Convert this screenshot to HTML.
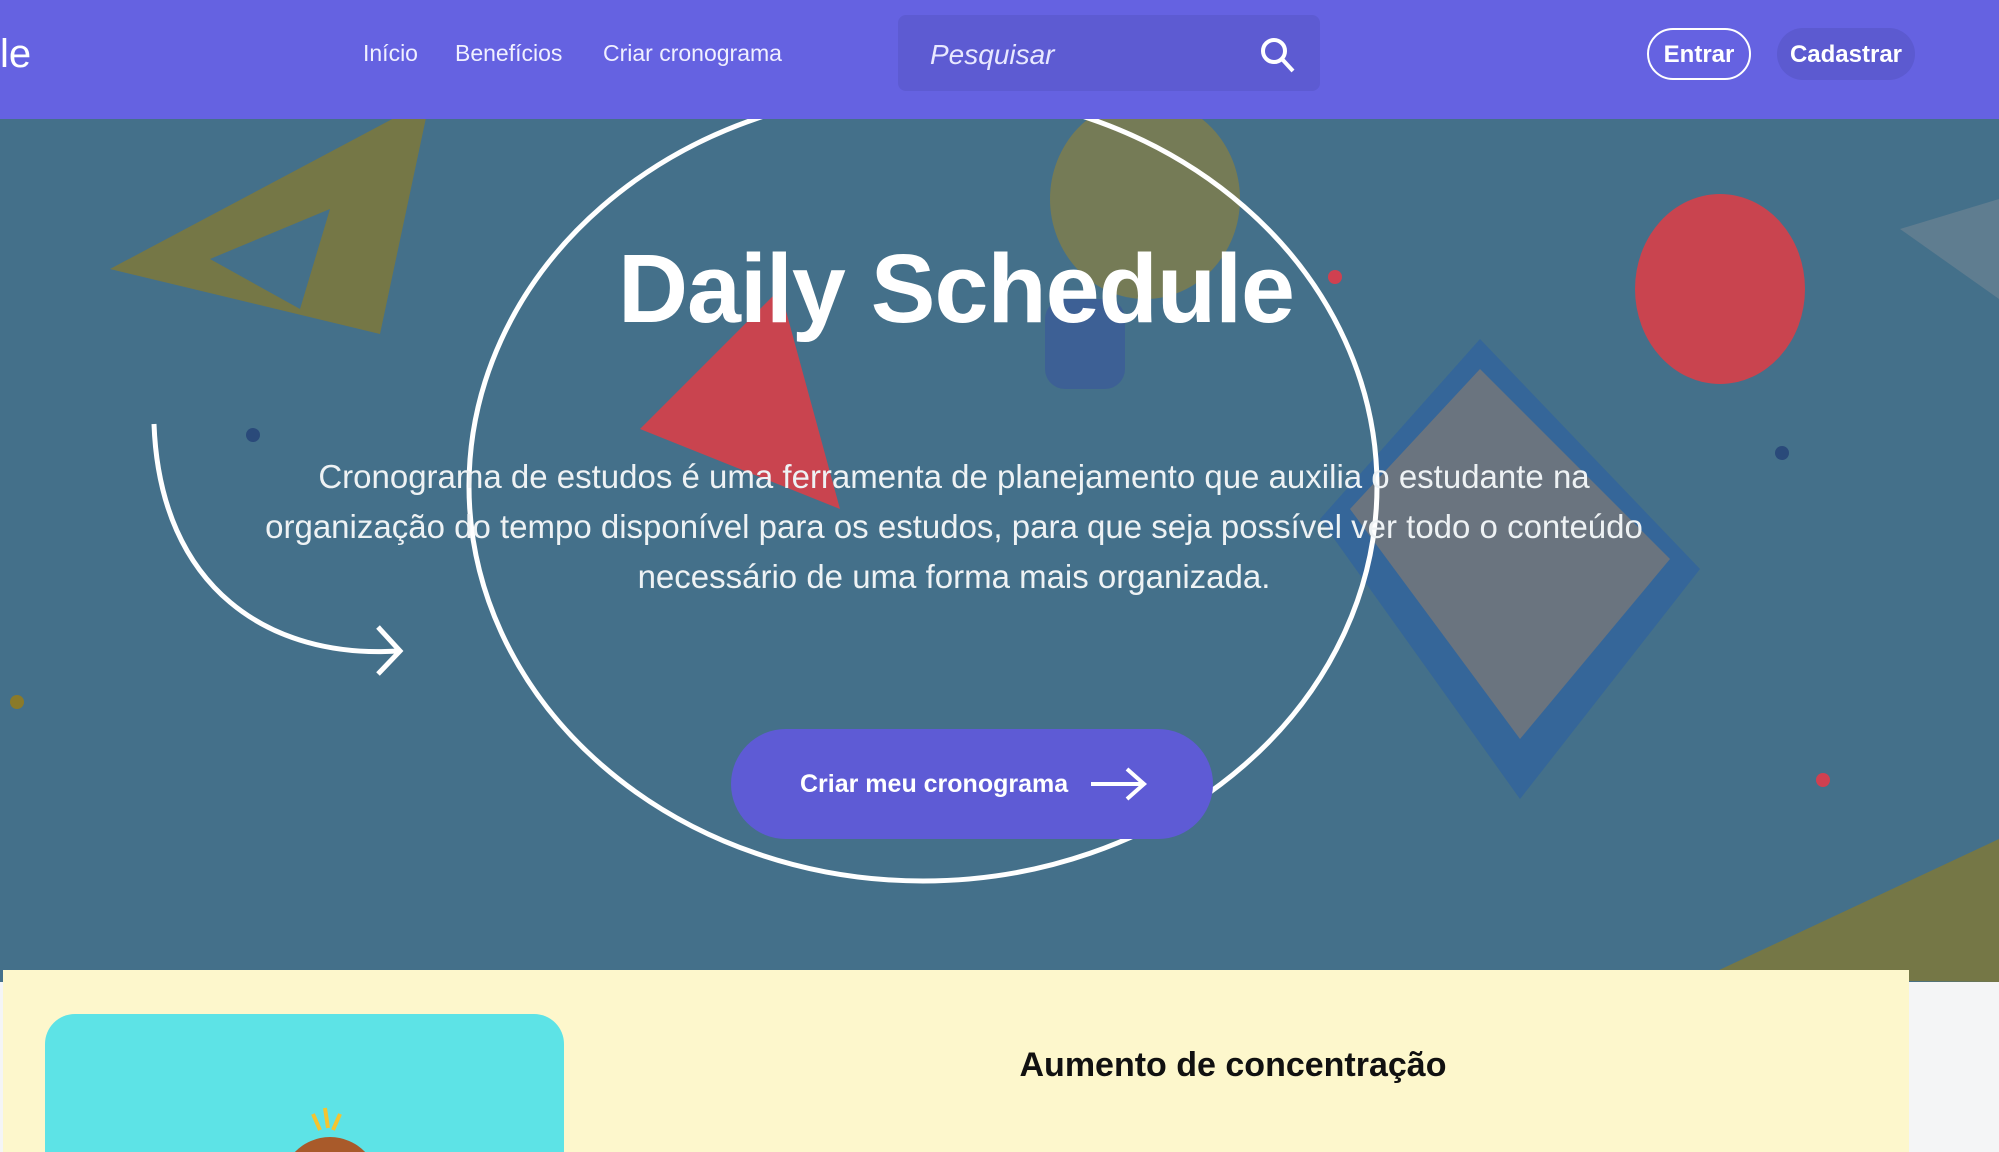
<!DOCTYPE html>
<html style="overflow:hidden"><head><meta charset="utf-8"><style>
*{margin:0;padding:0;box-sizing:border-box}
html,body{width:1999px;height:1152px;overflow:hidden}
body{background:#f4f5f6;font-family:"Liberation Sans",sans-serif;position:relative}
.nav{position:absolute;left:0;top:0;width:1999px;height:119px;background:#6562e1;color:#fff}
.nav a{position:absolute;top:40px;font-size:23px;color:#f0f0ff}
.search{position:absolute;left:898px;top:15px;width:422px;height:76px;background:#5d5bd2;border-radius:8px}
.search span{position:absolute;left:32px;top:24px;font-size:28px;font-style:italic;color:#e8e8ff}
.btn{position:absolute;top:28px;height:52px;border-radius:26px;font-weight:bold;font-size:24px;line-height:50px;text-align:center;color:#fff}
.hero{position:absolute;left:0;top:119px;width:1999px;height:863px;background:#44708a;overflow:hidden}
h1{position:absolute;left:0;width:1912px;text-align:center;font-size:97px;font-weight:bold;color:#fff;letter-spacing:-1px}
p.d{position:absolute;left:54px;width:1800px;text-align:center;font-size:33px;line-height:50px;color:#eef2f4}
.cta{position:absolute;left:731px;width:482px;height:110px;border-radius:55px;background:#5e5bd5;color:#fff;font-weight:bold;font-size:25px;line-height:110px;padding-left:69px}
.yel{position:absolute;left:3px;top:970px;width:1906px;height:182px;background:#fdf7cc}
.card{position:absolute;left:45px;top:1014px;width:519px;height:138px;background:#5de3e6;border-radius:30px 30px 0 0;overflow:hidden}
h2{position:absolute;left:1000px;top:1046px;width:466px;text-align:center;font-size:34px;font-weight:bold;color:#111}
</style></head><body>
<div class="hero">
<svg width="1999" height="863" style="position:absolute;left:0;top:0">
<polygon points="110,150 430,-20 380,215" fill="#8a7a2a" opacity=".7"/>
<polygon points="210,140 330,90 300,190" fill="#44708a"/>
<ellipse cx="1145" cy="80" rx="95" ry="100" fill="#8a8040" opacity=".7"/>
<rect x="1045" y="180" width="80" height="90" rx="20" fill="#3a5a9a" opacity=".7"/>
<polygon points="780,170 640,310 840,390" fill="#c9444f"/>
<ellipse cx="1720" cy="170" rx="85" ry="95" fill="#c9444f"/>
<polygon points="1320,400 1480,220 1700,450 1520,680" fill="#2f62a0" opacity=".7"/>
<polygon points="1350,390 1480,250 1670,440 1520,620" fill="#787878" opacity=".8"/>
<polygon points="1700,860 1999,720 1999,863" fill="#8a7a2a" opacity=".7"/>
<polygon points="1900,110 1999,80 1999,180" fill="#7a8a95" opacity=".5"/>
<circle cx="1335" cy="158" r="7" fill="#d04050"/><circle cx="1823" cy="661" r="7" fill="#d04050"/>
<circle cx="17" cy="583" r="7" fill="#8a7a2a"/><circle cx="253" cy="316" r="7" fill="#2a4a7a"/><circle cx="1782" cy="334" r="7" fill="#2a4a7a"/>
<ellipse cx="923" cy="367" rx="454" ry="395" fill="none" stroke="#fff" stroke-width="5"/>
<path d="M154,305 C160,470 270,540 398,532" fill="none" stroke="#fff" stroke-width="5"/>
<path d="M378,508 L400,532 L378,555" fill="none" stroke="#fff" stroke-width="5"/>
</svg>
<h1 style="top:114px">Daily Schedule</h1>
<p class="d" style="top:333px">Cronograma de estudos é uma ferramenta de planejamento que auxilia o estudante na<br>organização do tempo disponível para os estudos, para que seja possível ver todo o conteúdo<br>necessário de uma forma mais organizada.</p>
<div class="cta" style="top:610px">Criar meu cronograma
<svg width="60" height="40" style="position:absolute;left:358px;top:35px"><path d="M2,20 H54 M38,5 L55,20 L38,35" fill="none" stroke="#fff" stroke-width="4"/></svg></div>
</div>
<div class="nav">
<div style="position:absolute;left:0;top:32px;font-size:40px;color:#fff">le</div>
<a style="left:363px">Início</a><a style="left:455px">Benefícios</a><a style="left:603px">Criar cronograma</a>
<div class="search"><span>Pesquisar</span>
<svg width="40" height="40" style="position:absolute;left:360px;top:20px"><circle cx="16" cy="16" r="11" fill="none" stroke="#fff" stroke-width="4"/><path d="M24,24 L35,36" stroke="#fff" stroke-width="4"/></svg></div>
<div class="btn" style="left:1647px;width:104px;border:2px solid #fff">Entrar</div>
<div class="btn" style="left:1777px;width:138px;background:#5c5ad0;line-height:54px">Cadastrar</div>
</div>
<div class="yel"></div>
<div class="card"><svg width="200" height="58" style="position:absolute;left:180px;top:80px"><path d="M100,14 L103,34 M88,20 L95,36 M115,20 L108,36" stroke="#f4c430" stroke-width="4"/><ellipse cx="105" cy="95" rx="50" ry="52" fill="#a95a2a"/></svg></div>
<h2>Aumento de concentração</h2>
</body></html>
